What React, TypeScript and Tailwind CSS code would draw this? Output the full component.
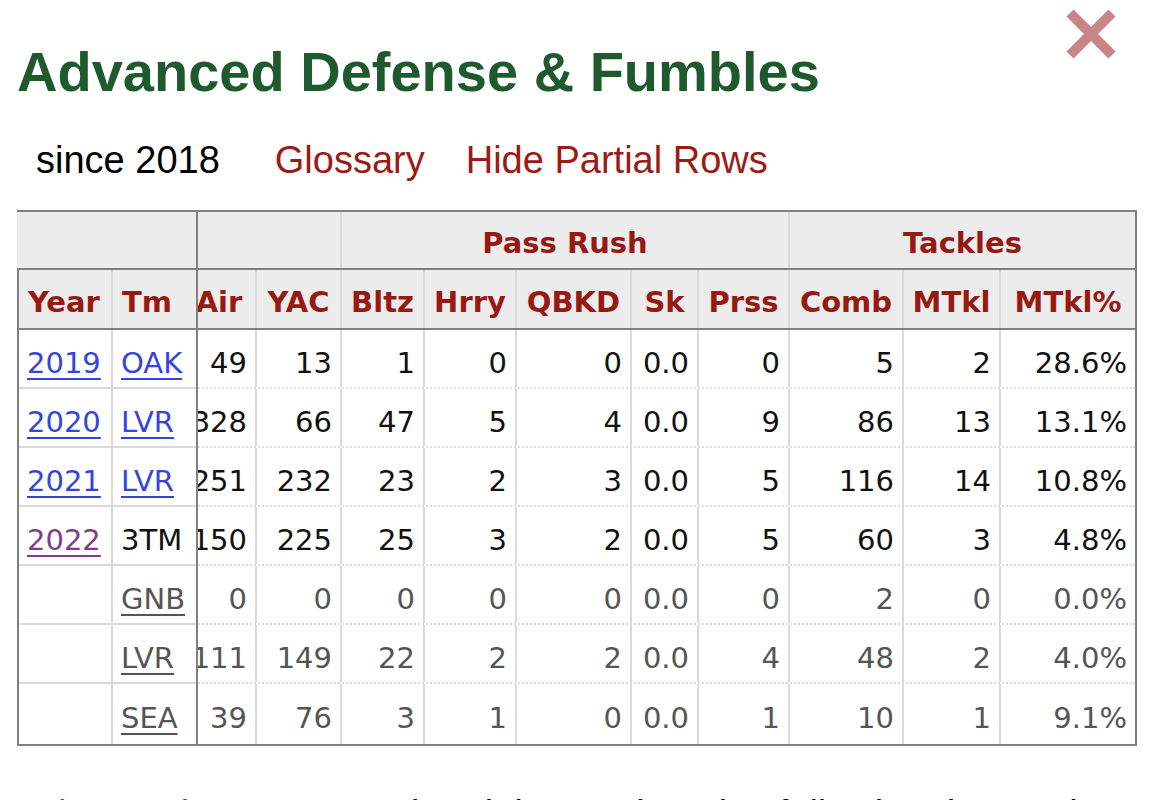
import React from "react"

type Row = {
  year: string
  yearKind: "link" | "visited" | "none"
  tm: string
  tmKind: "link" | "plain" | "partial"
  vals: string[]
}

const rows: Row[] = [
  { year: "2019", yearKind: "link", tm: "OAK", tmKind: "link", vals: ["49", "13", "1", "0", "0", "0.0", "0", "5", "2", "28.6%"] },
  { year: "2020", yearKind: "link", tm: "LVR", tmKind: "link", vals: ["328", "66", "47", "5", "4", "0.0", "9", "86", "13", "13.1%"] },
  { year: "2021", yearKind: "link", tm: "LVR", tmKind: "link", vals: ["251", "232", "23", "2", "3", "0.0", "5", "116", "14", "10.8%"] },
  { year: "2022", yearKind: "visited", tm: "3TM", tmKind: "plain", vals: ["150", "225", "25", "3", "2", "0.0", "5", "60", "3", "4.8%"] },
  { year: "", yearKind: "none", tm: "GNB", tmKind: "partial", vals: ["0", "0", "0", "0", "0", "0.0", "0", "2", "0", "0.0%"] },
  { year: "", yearKind: "none", tm: "LVR", tmKind: "partial", vals: ["111", "149", "22", "2", "2", "0.0", "4", "48", "2", "4.0%"] },
  { year: "", yearKind: "none", tm: "SEA", tmKind: "partial", vals: ["39", "76", "3", "1", "0", "0.0", "1", "10", "1", "9.1%"] },
]

// scrolled columns: Air is partly hidden under the frozen Year/Tm columns
const cols = [
  { label: "Air", w: "w-[74px]" },
  { label: "YAC", w: "w-[85px]" },
  { label: "Bltz", w: "w-[83px]" },
  { label: "Hrry", w: "w-[92px]" },
  { label: "QBKD", w: "w-[115px]" },
  { label: "Sk", w: "w-[67px]" },
  { label: "Prss", w: "w-[91px]" },
  { label: "Comb", w: "w-[114px]" },
  { label: "MTkl", w: "w-[97px]" },
  { label: "MTkl%", w: "w-[134px]" },
]

const rowHeights = ["h-[59px]", "h-[59px]", "h-[59px]", "h-[59px]", "h-[59px]", "h-[59px]", "h-[60px]"]

function CloseIcon() {
  return (
    <svg viewBox="0 0 50 50" className="w-[50px] h-[50px]">
      <line x1="4" y1="4" x2="46" y2="46" stroke="#c98585" strokeWidth="10" />
      <line x1="46" y1="4" x2="4" y2="46" stroke="#c98585" strokeWidth="10" />
    </svg>
  )
}

export default function App() {
  return (
    <div className="relative min-h-screen bg-white px-[17px] overflow-hidden h-[800px]">
      {/* close button */}
      <div className="absolute left-[1066px] top-[9px]">
        <CloseIcon />
      </div>

      {/* Title */}
      <h1
        className="pt-[40px] text-[56px] leading-[64px] font-bold text-[#1f5a2f]"
        style={{ fontFamily: '"Liberation Sans", Arial, sans-serif' }}
      >
        Advanced Defense &amp; Fumbles
      </h1>

      {/* filter links */}
      <div
        className="mt-[34px] h-[44px] flex items-center text-[38px] leading-[44px]"
        style={{ fontFamily: '"Liberation Sans", Arial, sans-serif' }}
      >
        <span className="ml-[19px] text-black">since 2018</span>
        <span className="ml-[55px] text-[#9b1b15]">Glossary</span>
        <span className="ml-[41px] text-[#9b1b15]">Hide Partial Rows</span>
      </div>

      {/* Table */}
      <div
        className="mt-[28px] w-[1120px] flex border-t-2 border-r-2 border-b-2 border-[#808080]"
        style={{ fontFamily: '"DejaVu Sans", Verdana, sans-serif' }}
      >
        {/* frozen Year / Tm */}
        <div className="w-[181px] shrink-0 border-l-2 border-r-2 border-[#808080] flex flex-col relative z-10 bg-white">
          <div className="-ml-[2px] w-[179px] h-[58px] bg-[#ececec] border-b-2 border-[#808080]" />
          <div className="h-[60px] flex bg-[#ececec] border-b-2 border-[#808080] text-[29px] font-bold text-[#961a12]">
            <div className="w-[94px] border-r-2 border-[#dadada] flex items-center pl-[9px] pt-[7px]">Year</div>
            <div className="w-[83px] flex items-center pl-[9px] pt-[7px]">Tm</div>
          </div>
          {rows.map((r, i) => (
            <div
              key={i}
              className={`${rowHeights[i]} flex text-[29px] ${i < rows.length - 1 ? "border-b-2 border-[#dadada]" : ""}`}
            >
              <div className="w-[94px] border-r-2 border-[#dadada] flex items-center pl-[8px] pt-[10px]">
                {r.yearKind === "link" && (
                  <span className="text-[#3445dd] underline decoration-2 underline-offset-[5px]">{r.year}</span>
                )}
                {r.yearKind === "visited" && (
                  <span className="text-[#7e3d8f] underline decoration-2 underline-offset-[5px]">{r.year}</span>
                )}
              </div>
              <div className="w-[83px] flex items-center pl-[8px] pt-[10px]">
                {r.tmKind === "link" && (
                  <span className="text-[#3445dd] underline decoration-2 underline-offset-[5px]">{r.tm}</span>
                )}
                {r.tmKind === "plain" && <span className="text-[#111]">{r.tm}</span>}
                {r.tmKind === "partial" && (
                  <span className="text-[#555] underline decoration-2 underline-offset-[5px]">{r.tm}</span>
                )}
              </div>
            </div>
          ))}
        </div>

        {/* scrolled stats */}
        <div className="w-[937px] shrink-0 overflow-hidden">
          <div className="w-[952px] -ml-[15px] flex flex-col">
            <div className="h-[58px] flex bg-[#ececec] border-b-2 border-[#808080] text-[29px] font-bold text-[#961a12]">
              <div className="w-[159px] border-r-2 border-[#dadada]" />
              <div className="w-[448px] border-r-2 border-[#dadada] flex items-center justify-center pt-[7px]">Pass Rush</div>
              <div className="w-[345px] flex items-center justify-center pt-[7px]">Tackles</div>
            </div>
            <div className="h-[60px] flex bg-[#ececec] border-b-2 border-[#808080] text-[29px] font-bold text-[#961a12]">
              {cols.map((c, j) => (
                <div
                  key={c.label}
                  className={`${c.w} flex items-center justify-center pt-[7px] whitespace-nowrap ${j < cols.length - 1 ? "border-r-2 border-[#dadada]" : ""}`}
                >
                  {c.label}
                </div>
              ))}
            </div>
            {rows.map((r, i) => (
              <div
                key={i}
                className={`${rowHeights[i]} flex text-[29px] ${r.tmKind === "partial" ? "text-[#555]" : "text-[#111]"} ${i < rows.length - 1 ? "border-b-2 border-dotted border-[#dcdcdc]" : ""}`}
              >
                {r.vals.map((v, j) => (
                  <div
                    key={j}
                    className={`${cols[j].w} flex items-center justify-end pr-[8px] pt-[10px] whitespace-nowrap ${j < cols.length - 1 ? "border-r-2 border-[#dadada]" : ""}`}
                  >
                    {v}
                  </div>
                ))}
              </div>
            ))}
          </div>
        </div>
      </div>

      {/* note below the table */}
      <p
        className="mt-[46px] ml-[3px] text-[38px] leading-[44px] whitespace-nowrap text-black"
        style={{ fontFamily: '"Liberation Sans", Arial, sans-serif' }}
      >
        <span className="text-[#3f3fd0]">Advanced stats</span> are updated the Wednesday following the week
      </p>
    </div>
  )
}
